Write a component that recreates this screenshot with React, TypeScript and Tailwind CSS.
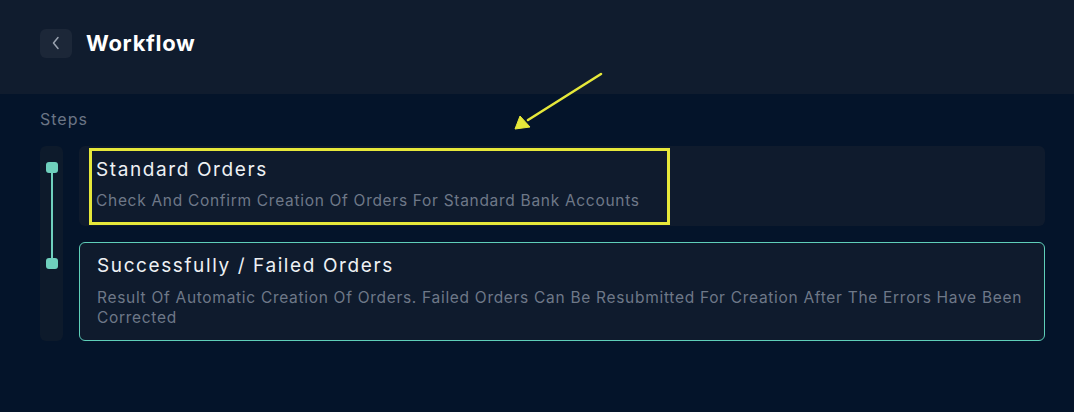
import React from "react";

export default function App() {
  return (
    <div className="w-[1074px] h-[412px] bg-[#04142a] overflow-hidden relative" style={{ fontFamily: "Inter, 'Noto Sans', sans-serif" }}>
      <header className="h-[94px] bg-[#101c2e] flex items-center pl-10 gap-[14px] pb-[8px]">
        <button className="w-8 h-[29px] rounded-md bg-[#1c2738] flex items-center justify-center">
          <svg width="10" height="14" viewBox="0 0 10 14" fill="none">
            <path d="M7 1.5 L2.5 7 L7 12.5" stroke="#9aa3b0" strokeWidth="1.5" strokeLinecap="round" strokeLinejoin="round" />
          </svg>
        </button>
        <h1 className="text-white text-[22px] font-bold tracking-[0.7px]">Workflow</h1>
      </header>
      <main className="px-10 pt-[16px]">
        <div className="text-[16px] text-[#6b7585] tracking-[1px] leading-[18px]">Steps</div>
        <div className="flex gap-4 mt-[18px]">
          <div className="w-[23px] rounded-md bg-[#0d1a2b] relative flex flex-col items-center pt-4">
            <div className="w-[12px] h-[11px] rounded-[3px] bg-[#6fd0bd]" />
            <div className="w-[2px] h-[85px] bg-[#6fd0bd]" />
            <div className="w-[12px] h-[11px] rounded-[3px] bg-[#6fd0bd]" />
          </div>
          <div className="flex-1 flex flex-col gap-4 mr-[-11px]">
            <div className="h-20 rounded-md bg-[#0f1b2d] relative pl-[17px] pr-[8px] pt-[13px]">
              <div className="absolute left-[10px] top-[2px] w-[581px] h-[77px] border-[3px] border-[#e6e83a]" />
              <div className="text-[19px] text-[#eef1f4] tracking-[1.6px] leading-[22px]">Standard Orders</div>
              <div className="text-[15.5px] text-[#6e7888] tracking-[0.7px] leading-[20px] mt-[10px]">Check And Confirm Creation Of Orders For Standard Bank Accounts</div>
            </div>
            <div className="rounded-md bg-[#0f1b2d] border border-[#5fcfb9] pl-[17px] pr-[8px] pt-[12px] pb-[12px]">
              <div className="text-[19px] text-[#eef1f4] tracking-[1.6px] leading-[22px]">Successfully / Failed Orders</div>
              <div className="text-[15.5px] text-[#6e7888] tracking-[0.7px] leading-[20px] mt-[11px]">Result Of Automatic Creation Of Orders. Failed Orders Can Be Resubmitted For Creation After The Errors Have Been Corrected</div>
            </div>
          </div>
        </div>
      </main>
      <svg className="absolute left-0 top-0 pointer-events-none" width="1074" height="412">
        <line x1="601" y1="74" x2="528" y2="120" stroke="#e6e83a" strokeWidth="2.6" strokeLinecap="round" />
        <polygon points="515,129 520,116 530,127" fill="#e6e83a" stroke="#e6e83a" strokeWidth="1" strokeLinejoin="round" />
      </svg>
    </div>
  );
}
